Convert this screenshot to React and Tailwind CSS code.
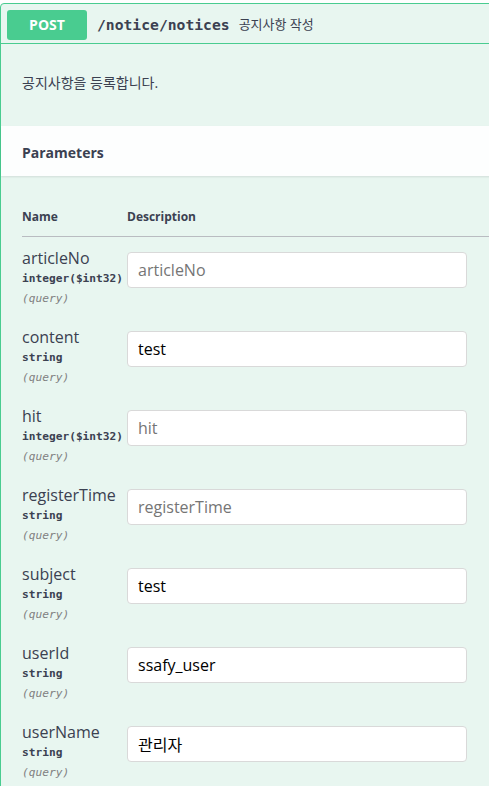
import React from "react";

const params = [
  { name: "articleNo", type: "integer($int32)", value: "", placeholder: "articleNo" },
  { name: "content", type: "string", value: "test", placeholder: "content" },
  { name: "hit", type: "integer($int32)", value: "", placeholder: "hit" },
  { name: "registerTime", type: "string", value: "", placeholder: "registerTime" },
  { name: "subject", type: "string", value: "test", placeholder: "subject" },
  { name: "userId", type: "string", value: "ssafy_user", placeholder: "userId" },
  { name: "userName", type: "string", value: "관리자", placeholder: "userName" },
];

const sans = { fontFamily: '"Open Sans", "Noto Sans CJK KR", sans-serif' };
const mono = { fontFamily: '"DejaVu Sans Mono", "Noto Sans CJK KR", monospace' };

export default function App() {
  return (
    <div className="w-[489px] h-[786px] overflow-hidden bg-white pt-[3px]" style={sans}>
      <div className="w-[520px] border border-[#49cc90] rounded-[4px] bg-[#e8f6f0] text-[#3b4151]">
        {/* summary */}
        <div className="flex items-center h-[40px] pl-[6px] border-b border-[#49cc90]">
          <span className="w-[80px] h-[30px] mt-[2px] rounded-[3px] bg-[#49cc90] text-white text-[14px] font-bold flex items-center justify-center">
            POST
          </span>
          <span className="ml-[10px] mt-[3px] text-[14.7px] font-bold text-[#3b4151]" style={mono}>
            /notice/notices
          </span>
          <span className="ml-[9px] mt-[3px] text-[13px] text-[#3b4151]">공지사항 작성</span>
        </div>

        {/* description */}
        <div className="pl-[21px] pt-[29px] pb-[33px] text-[14px] leading-[20px]">
          공지사항을 등록합니다.
        </div>

        {/* parameters header */}
        <div className="h-[50px] bg-[#fdfefe] shadow-[0_1px_2px_rgba(0,0,0,0.1)] flex items-center pl-[21px] pt-[2px]">
          <span className="text-[14px] font-bold">Parameters</span>
        </div>

        {/* table */}
        <div className="pl-[21px]">
          <div className="flex pt-[33px] pb-[11px] border-b border-[#b9bcc1] text-[12px] leading-[16px] font-bold">
            <div className="w-[105px]">Name</div>
            <div>Description</div>
          </div>
          {params.map((p) => (
            <div key={p.name} className="flex items-start pt-[11px] pb-[7px]">
              <div className="w-[105px] shrink-0">
                <div className="text-[16px] leading-[20px] text-[#3b4151]">{p.name}</div>
                <div className="text-[11.2px] leading-[21px] font-bold whitespace-nowrap text-[#3b4151]" style={mono}>
                  {p.type}
                </div>
                <div className="text-[11.2px] leading-[20px] italic text-[#808080]" style={mono}>
                  (query)
                </div>
              </div>
              <input
                className="mt-[4px] w-[340px] h-[36px] bg-white border border-[#d9d9d9] rounded-[4px] px-[10px] text-[16px] text-black placeholder:text-[#757575] outline-none"
                style={sans}
                defaultValue={p.value}
                placeholder={p.placeholder}
              />
            </div>
          ))}
        </div>
      </div>
    </div>
  );
}
